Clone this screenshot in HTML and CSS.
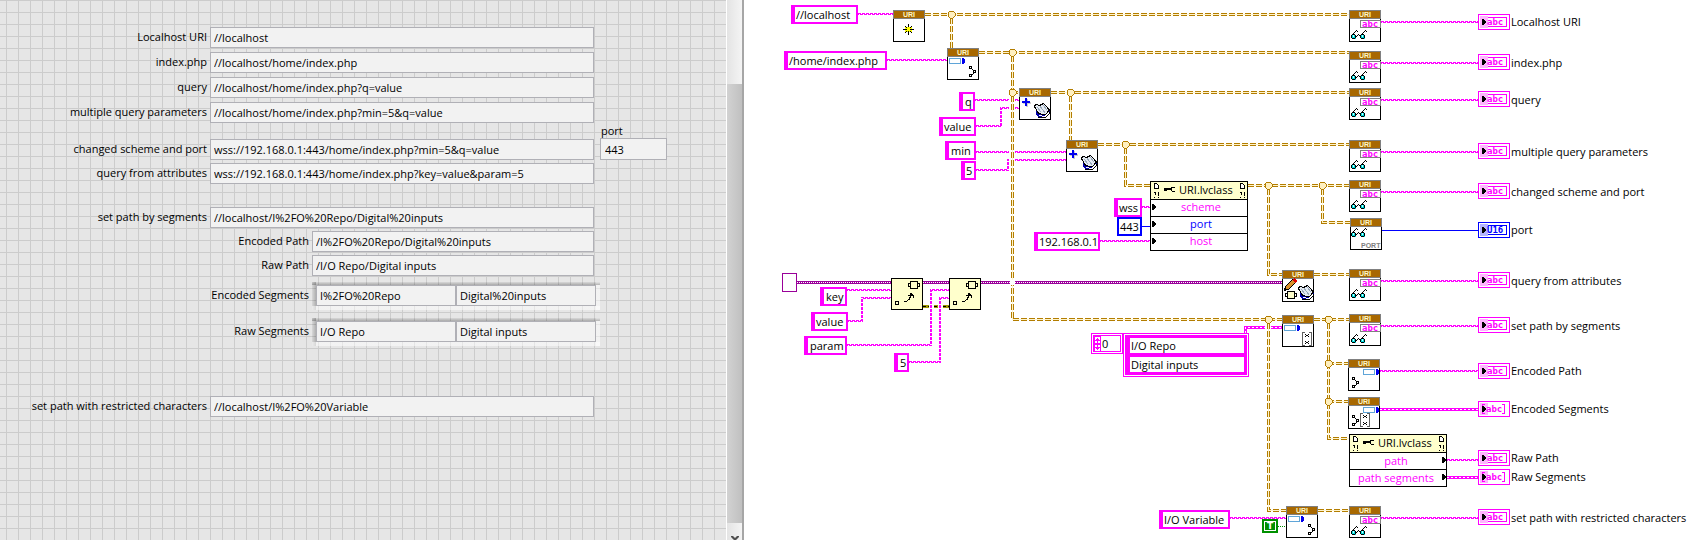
FILE: index.html
```html
<!DOCTYPE html>
<html lang="en">
<head>
<meta charset="utf-8">
<title>URI examples</title>
<link rel="stylesheet" href="styles.css">
</head>
<body>
<main class="workspace">
  <section class="front-panel" aria-label="Front panel">
    <form class="indicators">
      <div class="row"><label for="f1">Localhost URI</label><input id="f1" readonly value="//localhost"></div>
      <div class="row"><label for="f2">index.php</label><input id="f2" readonly value="//localhost/home/index.php"></div>
      <div class="row"><label for="f3">query</label><input id="f3" readonly value="//localhost/home/index.php?q=value"></div>
      <div class="row"><label for="f4">multiple query parameters</label><input id="f4" readonly value="//localhost/home/index.php?min=5&amp;q=value"></div>
      <div class="row row-port">
        <label for="f5">changed scheme and port</label><input id="f5" readonly value="wss://192.168.0.1:443/home/index.php?min=5&amp;q=value">
        <div class="port"><label for="port">port</label><input id="port" readonly value="443"></div>
      </div>
      <div class="row tight"><label for="f6">query from attributes</label><input id="f6" readonly value="wss://192.168.0.1:443/home/index.php?key=value&amp;param=5"></div>
      <div class="row spaced"><label for="f7">set path by segments</label><input id="f7" readonly value="//localhost/I%2FO%20Repo/Digital%20inputs"></div>
      <div class="row nested tight"><label for="f8">Encoded Path</label><input id="f8" readonly value="/I%2FO%20Repo/Digital%20inputs"></div>
      <div class="row nested tight"><label for="f9">Raw Path</label><input id="f9" readonly value="/I/O Repo/Digital inputs"></div>
      <div class="row nested segments"><label for="f10">Encoded Segments</label><div class="array"><input id="f10" readonly value="I%2FO%20Repo"><input aria-label="Encoded segment 2" readonly value="Digital%20inputs"></div></div>
      <div class="row nested segments"><label for="f11">Raw Segments</label><div class="array"><input id="f11" readonly value="I/O Repo"><input aria-label="Raw segment 2" readonly value="Digital inputs"></div></div>
      <div class="row last"><label for="f12">set path with restricted characters</label><input id="f12" readonly value="//localhost/I%2FO%20Variable"></div>
    </form>
  </section>
  <div class="scrollbar">
    <div class="thumb"></div>
    <button type="button" class="scroll-down" aria-label="Scroll down"><svg width="8" height="6" viewBox="0 0 8 6"><path d="M0 0h2l2 2 2-2h2v1L4 5 0 1z"/></svg></button>
  </div>
  <section class="diagram" aria-label="Block diagram">
<svg class="canvas" width="951" height="540" viewBox="744 0 951 540">
<defs>
  <symbol id="uri" width="32" height="32" viewBox="0 0 32 32">
    <rect class="node" x=".5" y=".5" width="31" height="31"/>
    <rect class="head" x=".5" y=".5" width="31" height="8"/>
    <text class="tiny cream" x="10" y="7">URI</text>
  </symbol>
  <symbol id="glasses" width="18" height="10" viewBox="0 0 18 10">
    <path class="cyan" d="M1 5h4v4h-4zM10 5h4v4h-4z"/>
    <path class="glint" d="M2 5h1v2h-1zM11 5h1v2h-1z"/>
    <path class="ink none" d="M1.500 4v1M.5 5v3M1 8.500h3M4.500 5v3M2 4.500h2M2.500 3v1M3.500 2v1M4.500 1v1M5 .5h1M6.500 1v1M5 6.500h1M6.500 5v1M7 4.500h1M8.500 5v1M9.500 5v3M10 8.500h3M13.500 5v3M10.500 4v1M11 4.500h2M11.500 3v1M12.500 2v1M13.500 1v1M14 .5h1M15.500 1v1"/>
  </symbol>
  <symbol id="reader" width="32" height="32" viewBox="0 0 32 32">
    <use href="#uri"/>
    <rect class="badge" x="11.5" y="10.500" width="20" height="7"/>
    <text class="abc pink" x="13" y="17">abc</text>
    <use href="#glasses" x="2" y="20"/>
  </symbol>
  <symbol id="bar" width="17" height="6" viewBox="0 0 17 6"><rect class="bar" x=".5" y=".5" width="11" height="5"/><path class="blue" d="M13 0h1l2 2v2l-2 2h-1z"/></symbol>
  <symbol id="tree" width="8" height="12" viewBox="0 0 8 12"><path class="ink" d="M3 3l2 2M3 9l2-2"/><path class="ink white" d="M.5.5h2v2h-2zM4.500 4.500h2v2h-2zM.5 8.500h2v2h-2z"/></symbol>
  <symbol id="items" width="10" height="14" viewBox="0 0 10 14"><path class="bracket" d="M3 .5H.5v13H3M7 .5h2.500v13H7"/><path class="black" d="M3 2h1v1h-1zM6 2h1v1h-1zM4 3h2v1h-2zM3 4h1v1h-1zM6 4h1v1h-1zM3 9h1v1h-1zM6 9h1v1h-1zM4 10h2v1h-2zM3 11h1v1h-1zM6 11h1v1h-1z"/></symbol>
  <symbol id="book" width="18" height="17" viewBox="0 0 18 17">
    <path class="navy" d="M3 9l3 3 6 1 5-5v3l-5 5-7-1-2-2z"/>
    <path class="paper" d="M1 4l3-2 3 1 4-2 6 7-5 5-7-2z"/>
    <path class="ink none" d="M1.500 3.500l2-1 3 1 4-2 6 6.500-4.500 5-6-1.500"/>
    <path class="grayline" d="M7 4l5 7M4 5l4 5M10 3l4 5"/>
    <path class="ink none" d="M1 4l5 8M5 15.500h7l5-5"/>
    <path class="whiteline" d="M6 13.500l6 1 4-4"/>
  </symbol>
  <symbol id="tag" width="12" height="8" viewBox="0 0 12 8"><path class="ink none" d="M2.500 2.500h-2v3h2M9.500 2.500h2v3h-2"/><path class="ink cream-fill" d="M3 .5h6l.5.5v6l-.5.5h-6l-.5-.5v-6z"/></symbol>
  <symbol id="attr" width="32" height="32" viewBox="0 0 32 32">
    <rect class="func" x=".5" y=".5" width="31" height="31"/><use href="#tag" x="17" y="3"/>
    <rect class="ink none" x="4.500" y="23.500" width="3" height="3"/>
    <path class="ink none" d="M13 23.500h2l3-2 2-4v-1M16.500 17.500h2l1.500-2 2 2v2"/>
  </symbol>
  <symbol id="plus" width="9" height="9" viewBox="0 0 9 9"><path class="shadow" d="M4 1h2v3h3v2h-3v3h-2v-3h-3v-2h3z"/><path class="blue" d="M3 0h2v3h3v2h-3v3h-2v-3h-3v-2h3z"/></symbol>
  <symbol id="addquery" width="32" height="32" viewBox="0 0 32 32"><use href="#uri"/><use href="#plus" x="3" y="10"/><use href="#book" x="14" y="14"/></symbol>
  <symbol id="term" width="32" height="16" viewBox="0 0 32 16">
    <rect class="t-out" x=".5" y=".5" width="31" height="15"/><rect class="t-in" x="3.500" y="3.500" width="25" height="9"/>
    <rect class="t-shade" x="2" y="2" width="8" height="12"/><path class="black" d="M4 5h1l3 3-3 3h-1z"/>
    <text class="abc t-text" x="9" y="11">abc</text>
  </symbol>
  <symbol id="termarray" width="32" height="16" viewBox="0 0 32 16">
    <rect class="t-out" x=".5" y=".5" width="31" height="15"/><rect class="t-shade" x="2" y="2" width="8" height="12"/>
    <path class="t-in" d="M7 3.500H4.500v9H7M24 3.500h2.500v9H24"/><path class="black" d="M4 5h1l3 3-3 3h-1z"/>
    <text class="abc t-text" x="8" y="11">abc</text>
  </symbol>
  <symbol id="joint" width="9" height="9" viewBox="0 0 9 9"><path class="joint" d="M3 1h3l2 2v3l-2 2h-3l-2-2v-3z"/></symbol>
  <symbol id="doc" width="6" height="16" viewBox="0 0 6 16"><path class="ink white" d="M.5.5h2l2 2v3h-4z"/><path class="ink none" d="M0 9.500h1.500v2l-1 1M.5 14v1M4.500 9v4M4.500 14v1"/></symbol>
  <symbol id="key" width="12" height="7" viewBox="0 0 12 7"><path class="black" d="M0 2h7v2H3v1H0z"/><path class="ink none" d="M11 1.500h-3l-1 1v1l1 1.500h3"/></symbol>
</defs>

<!-- Class wires -->
<g>
  <g class="cls"><path d="M925 14.500H1349M951.500 18V48M979 52.500H1349M1012.500 56V319.500H1282M1012 92.500H1019M1051 92.500H1349M1070.500 96V140M1098 144.500H1349M1125.500 148V185.500H1150M1248 185.500H1349M1268.500 189V274.500H1282M1322.500 189V222.500H1350M1314 274.500H1349M1314 319.500H1349M1328.500 323V438.500H1349M1328 363.500H1348M1328 401.500H1348M1268.500 323V510.500H1286M1318 510.500H1349"/></g>
  <g class="cls-core"><path d="M925 14.500H1349M951.500 18V48M979 52.500H1349M1012.500 56V319.500H1282M1012 92.500H1019M1051 92.500H1349M1070.500 96V140M1098 144.500H1349M1125.500 148V185.500H1150M1248 185.500H1349M1268.500 189V274.500H1282M1322.500 189V222.500H1350M1314 274.500H1349M1314 319.500H1349M1328.500 323V438.500H1349M1328 363.500H1348M1328 401.500H1348M1268.500 323V510.500H1286M1318 510.500H1349"/></g>
  <use href="#joint" x="947" y="10"/><use href="#joint" x="1008" y="48"/><use href="#joint" x="1008" y="88"/><use href="#joint" x="1066" y="88"/><use href="#joint" x="1121" y="140"/><use href="#joint" x="1264" y="181"/><use href="#joint" x="1318" y="181"/><use href="#joint" x="1264" y="315"/><use href="#joint" x="1324" y="315"/><use href="#joint" x="1324" y="359"/><use href="#joint" x="1324" y="397"/>
</g>

<!-- String wires -->
<g class="str a"><path d="M858 13.500H893M887 59.500H947M975 99.500H1009M1015 99.500H1019M976 125.500H1000.500V107.500H1009M1015 107.500H1019M976 151.500H1009M1015 151.500H1066M976 169.500H1007.500V159.500H1009M1015 159.500H1066M1142 206.500H1150M1100 240.500H1150M847 289.500H891M848 320.500H861.500V297.500H891M847 344.500H930.500V289.500H949M909 361.500H939.500V297.500H949M1230 517.500H1286M1381 21.500H1478M1381 62.500H1478M1381 99.500H1478M1381 151.500H1478M1381 191.500H1478M1381 280.500H1478M1381 325.500H1478M1380 370.500H1478M1447 459.500H1478M1381 517.500H1478"/></g>
<g class="str b"><path d="M858 14.500H893M887 60.500H947M975 100.500H1009M1015 100.500H1019M976 126.500H1001.500V108.500H1009M1015 108.500H1019M976 152.500H1009M1015 152.500H1066M976 170.500H1008.500V160.500H1009M1015 160.500H1066M1142 207.500H1150M1100 241.500H1150M847 290.500H891M848 321.500H862.500V298.500H891M847 345.500H931.500V290.500H949M909 362.500H940.500V298.500H949M1230 518.500H1286M1381 22.500H1478M1381 63.500H1478M1381 100.500H1478M1381 152.500H1478M1381 192.500H1478M1381 281.500H1478M1381 326.500H1478M1380 371.500H1478M1447 460.500H1478M1381 518.500H1478"/></g>
<path class="strarr" d="M1245.500 333V327.500H1265M1271 327.500H1282M1380 409.500H1478M1447 477.500H1478"/>
<path class="holes" d="M1245.500 333V327.500H1265M1271 327.500H1282M1380 409.500H1478M1447 477.500H1478"/>
<path class="num" d="M1142 226.500h8M1382 230.500h96"/>
<path class="mask" d="M1010 282.500h5"/>
<path class="variant" d="M797 282.500H891M923 282.500H949M981 282.500H1010M1015 282.500H1282"/>
<path class="dots" d="M797 282.500H891M923 282.500H949M981 282.500H1010M1015 282.500H1282"/>
<path class="err" d="M923 306.500h6M934 306.500h4M943 306.500h6"/><path class="err-core" d="M923 306.500h6M934 306.500h4M943 306.500h6"/>
<path class="bool" d="M1278 526.500h8"/>

<!-- Nodes -->
<g class="gray-node"><use href="#uri" x="893" y="10"/></g>
<path class="spark" d="M905 27h7v5h-7z"/><path class="ink" d="M908.500 24v3M908.500 31v4M903 29.500h4M910 29.500h4M905 26l2 2M912 26l-2 2M905 33l2-2M912 33l-2-2"/>
<use href="#uri" x="947" y="48"/><use href="#bar" x="949" y="58"/><use href="#tree" x="969" y="66"/>
<use href="#addquery" x="1019" y="88"/><use href="#addquery" x="1066" y="140"/>
<use href="#reader" x="1349" y="10"/><use href="#reader" x="1349" y="51"/><use href="#reader" x="1349" y="88"/><use href="#reader" x="1349" y="140"/><use href="#reader" x="1349" y="180"/><use href="#reader" x="1349" y="269"/><use href="#reader" x="1349" y="314"/><use href="#reader" x="1349" y="506"/>
<use href="#uri" x="1350" y="218"/><use href="#glasses" x="1351" y="228"/><text class="tiny gray" x="1361" y="248">PORT</text>
<use href="#attr" x="891" y="278"/><use href="#attr" x="949" y="278"/>
<use href="#uri" x="1282" y="270"/><use href="#book" x="1297" y="284"/><use href="#tag" x="1285" y="291"/>
<path class="ink pencil" d="M1285 290l1-4 7-7 3 3-7 7z"/><path class="red" d="M1292 280l2-2 3 3-2 2z"/><path class="black" d="M1284 288h2v3h-2z"/>
<use href="#uri" x="1282" y="315"/><use href="#bar" x="1284" y="325"/><use href="#items" x="1302" y="332"/>
<use href="#uri" x="1348" y="359"/><use href="#bar" x="1363" y="369"/><use href="#tree" x="1352" y="377"/>
<use href="#uri" x="1348" y="397"/><use href="#bar" x="1363" y="407"/><use href="#tree" x="1352" y="415"/><use href="#items" x="1360" y="413"/>
<use href="#uri" x="1286" y="506"/><use href="#bar" x="1288" y="516"/><use href="#tree" x="1308" y="524"/>

<!-- Property nodes -->
<rect class="node" x="1150.500" y="181.500" width="97" height="69"/><rect class="func" x="1150.500" y="181.500" width="97" height="18"/>
<path class="ink" d="M1150 216.500h98M1150 233.500h98"/>
<use href="#doc" x="1154" y="183"/><use href="#key" x="1164" y="186"/><use href="#doc" x="1240" y="183"/>
<path class="black" d="M1152 204h1l3 3-3 3h-1zM1152 221h1l3 3-3 3h-1zM1152 238h1l3 3-3 3h-1z"/>
<text x="1179" y="194">URI.lvclass</text>
<text class="mid pink" x="1201" y="211">scheme</text><text class="mid bluetext" x="1201" y="228">port</text><text class="mid pink" x="1201" y="245">host</text>
<rect class="node" x="1349.500" y="434.500" width="97" height="52"/><rect class="func" x="1349.500" y="434.500" width="97" height="18"/>
<path class="ink" d="M1349 469.500h98"/>
<use href="#doc" x="1353" y="436"/><use href="#key" x="1363" y="439"/><use href="#doc" x="1439" y="436"/>
<path class="black" d="M1442 457h1l3 3-3 3h-1zM1442 474h1l3 3-3 3h-1z"/>
<text x="1378" y="447">URI.lvclass</text>
<text class="mid pink" x="1396" y="465">path</text><text class="mid pink" x="1396" y="482">path segments</text>

<!-- Constants -->
<path class="const" d="M792 6h65v17h-65zM793 6v17M785 52h101v17h-101zM786 52v17M960 93h14v17h-14zM961 93v17M940 118h35v17h-35zM941 118v17M946 142h29v17h-29zM947 142v17M962 162h13v17h-13zM963 162v17M1115 199h26v17h-26zM1116 199v17M1035 233h64v17h-64zM1036 233v17M821 288h25v17h-25zM822 288v17M812 313h35v17h-35zM813 313v17M805 337h41v17h-41zM806 337v17M895 354h13v17h-13zM896 354v17M1160 511h69v17h-69zM1161 511v17"/>
<path class="edge" d="M794 5v19M787 51v19M962 92v19M942 117v19M948 141v19M964 161v19M1117 198v19M1037 232v19M823 287v19M814 312v19M807 336v19M897 353v19M1162 510v19"/>
<path class="const numconst" d="M1118 218h23v17h-23z"/>
<text x="796" y="19">//localhost</text><text x="789" y="65">/home/index.php</text><text x="965" y="106">q</text><text x="944" y="131">value</text><text x="951" y="155">min</text><text x="966" y="175">5</text>
<text x="1119" y="212">wss</text><text x="1120" y="231">443</text><text x="1039" y="246">192.168.0.1</text>
<text x="826" y="301">key</text><text x="816" y="326">value</text><text x="810" y="350">param</text><text x="900" y="367">5</text><text x="1164" y="524">I/O Variable</text>
<rect class="empty" x="782.500" y="273.500" width="14" height="18"/>
<rect class="thin" x="1091.500" y="333.500" width="31" height="20"/><rect class="thin" x="1093.500" y="335.500" width="27" height="16"/>
<path class="pink" d="M1094 336h7v16h-7z"/><path class="spin" d="M1095 337h5v6h-5zM1095 345h5v6h-5z"/><path class="pink" d="M1097 338h1l2 3h-2v2h-1v-2h-2zM1097 345h1v2h2l-2 3h-1l-2-3h2z"/><text x="1102" y="348">0</text>
<rect class="thin" x="1123.500" y="333.500" width="125" height="43"/><path class="pink" d="M1125 335h122v40h-122z"/><path class="cell" d="M1130 338h114v15h-114zM1130 357h114v15h-114z"/>
<text x="1131" y="350">I/O Repo</text><text x="1131" y="369">Digital inputs</text>
<path class="green" d="M1262 519h16v14h-16z"/><path class="green-in" d="M1264.500 521.500h11v9h-11z"/><text class="true" x="1267" y="529">T</text>

<!-- Indicator terminals -->
<use href="#term" x="1478" y="14"/><use href="#term" x="1478" y="54"/><use href="#term" x="1478" y="91"/><use href="#term" x="1478" y="143"/><use href="#term" x="1478" y="183"/><use href="#term" x="1478" y="272"/><use href="#term" x="1478" y="317"/><use href="#term" x="1478" y="363"/><use href="#termarray" x="1478" y="401"/><use href="#term" x="1478" y="450"/><use href="#termarray" x="1478" y="469"/><use href="#term" x="1478" y="509"/>
<g class="u16"><rect class="t-out" x="1478.500" y="222.500" width="31" height="15"/><rect class="t-in" x="1481.500" y="225.500" width="25" height="9"/><rect class="t-shade" x="1480" y="224" width="8" height="12"/><path class="black" d="M1482 227h1l3 3-3 3h-1z"/><text class="abc t-text" x="1487" y="233">U16</text></g>
<text x="1511" y="26">Localhost URI</text><text x="1511" y="67">index.php</text><text x="1511" y="104">query</text><text x="1511" y="156">multiple query parameters</text><text x="1511" y="196">changed scheme and port</text><text x="1511" y="234">port</text><text x="1511" y="285">query from attributes</text><text x="1511" y="330">set path by segments</text><text x="1511" y="375">Encoded Path</text><text x="1511" y="413">Encoded Segments</text><text x="1511" y="462">Raw Path</text><text x="1511" y="481">Raw Segments</text><text x="1511" y="522">set path with restricted characters</text>
</svg>
  </section>
</main>
</body>
</html>
```
FILE: styles.css
```css
* { box-sizing: border-box; }
body { margin: 0; background: #fff; font: 11px/14px "Open Sans", "Noto Sans", sans-serif; color: #000; }
.workspace { display: flex; min-height: 100vh; }

/* Front panel */
.front-panel {
  flex: 726 1 0;
  min-width: 668px;
  padding-top: 27px;
  background-color: #e6e6e6;
  background-image: linear-gradient(#ccc 1px, transparent 1px), linear-gradient(90deg, #ccc 1px, transparent 1px);
  background-size: 12px 12px;
  background-position: 0 0, 6px 0;
}
.indicators { display: flex; flex-direction: column; }
.row { display: flex; align-items: flex-end; margin-bottom: 4px; }
.row > label { flex: none; width: 210px; padding: 0 3px 4px 0; text-align: right; }
.row input {
  width: 384px;
  height: 21px;
  padding: 0 3px;
  border: 1px solid #b0b0b6;
  border-radius: 0;
  background: #f2f2f2;
  font: inherit;
  color: inherit;
  outline: 0;
}
.row-port { margin: -3px 0 3px; }
.tight { margin-bottom: 3px; }
.spaced { margin: 20px 0 3px; }
.nested > label { width: 312px; }
.nested input { width: 282px; }
.segments { margin: 3px 0 5px; }
.segments > label { padding-bottom: 8px; }
.array {
  display: flex;
  padding: 3px 4px 4px;
  background:
    linear-gradient(rgba(0, 0, 0, .06), rgba(0, 0, 0, .26)) 0 0 / 100% 3px no-repeat,
    linear-gradient(rgba(255, 255, 255, .5), rgba(255, 255, 255, .5)) 0 100% / 100% 4px no-repeat,
    linear-gradient(90deg, rgba(0, 0, 0, .06), rgba(0, 0, 0, .24)) 0 0 / 4px 100% no-repeat,
    linear-gradient(rgba(255, 255, 255, .5), rgba(255, 255, 255, .5)) 100% 0 / 4px 100% no-repeat;
}
.array input { width: 140px; }
.last { margin: 45px 0 0; }
.port { display: flex; flex-direction: column; margin-left: 6px; }
.port label { padding-left: 1px; }
.row .port input { width: 67px; height: 22px; padding: 0 4px; }

.scrollbar {
  display: flex;
  flex-direction: column;
  flex: none;
  width: 18px;
  padding-top: 84px;
  border-left: 1px solid #fff;
  border-right: 2px solid #a6a6a6;
  background: linear-gradient(90deg, #e4e4e4, #f4f4f4);
}
.thumb { flex: 1; background: linear-gradient(90deg, #d2d2d2, #c0c0c0); }
.scroll-down { height: 17px; padding: 0; border: 0; background: none; overflow: hidden; fill: #505050; line-height: 0; }
.scroll-down svg { margin-top: 13px; }

/* Block diagram */
.diagram { flex: 951 1 0; min-width: 951px; background: #fff; }
.canvas { display: block; shape-rendering: crispEdges; font-size: 11px; }
.canvas path, .canvas rect { stroke-width: 1px; }
.cls, .cls-core, .str, .strarr, .holes, .num, .variant, .dots, .err, .err-core, .bool, .mask { fill: none; }
.canvas .cls path { stroke: #b37d00; stroke-width: 3px; stroke-dasharray: 6 2; }
.cls-core path { stroke: #fff4cc; }
.joint { fill: #fff0c0; stroke: #b37d00; }
.canvas .mask { stroke: #fff; stroke-width: 5px; }
.str path { stroke: #f0f; stroke-dasharray: 3 1; }
.str.b path { stroke-dashoffset: 2px; }
.canvas .strarr { stroke: #f0f; stroke-width: 3px; }
.holes { stroke: #fff; stroke-dasharray: 2 2; }
.num { stroke: #00f; }
.canvas .variant { stroke: #909; stroke-width: 3px; }
.dots { stroke: #fff; stroke-dasharray: 1 1; }
.canvas .err { stroke: #a09a00; stroke-width: 3px; }
.err-core { stroke: #000; stroke-dasharray: 3 2; }
.bool { stroke: #009000; stroke-dasharray: 1 1; }
.node { fill: #fff; stroke: #000; }
.gray-node .node { stroke: #808080; }
.head { fill: #a86800; stroke: #808080; }
.func { fill: #ffc; stroke: #000; }
.ink { stroke: #000; }
.none { fill: none; }
.white { fill: #fff; }
.cyan { fill: #0dd; }
.glint { fill: #cff; }
.navy { fill: #00a; }
.paper { fill: #e4eaf2; }
.grayline { fill: none; stroke: #9ab; }
.whiteline { fill: none; stroke: #fff; }
.cream-fill { fill: #ffc; }
.shadow { fill: #ccc; }
.badge { fill: #fff; stroke: #808080; }
.bar { fill: #fff; stroke: #5fa5d8; }
.bracket { fill: none; stroke: #606060; }
.blue { fill: #00e; }
.black { fill: #000; }
.red { fill: #d00; }
.pencil { fill: #d8902c; }
.spark { fill: #ff0; }
.pink { fill: #f0f; }
.bluetext { fill: #00f; }
.gray { fill: #808080; }
.mid { text-anchor: middle; }
.tiny { font: bold 7px "Liberation Sans", sans-serif; }
.cream { fill: #fff8c8; }
.abc { font: bold 9px "DejaVu Sans Mono", monospace; }
.canvas .const { fill: #fff; stroke: #f0f; stroke-width: 2px; }
.canvas .numconst { stroke: #00f; }
.canvas .edge { fill: none; stroke: #f0f; stroke-width: 2px; }
.empty { fill: #fff; stroke: #909; }
.thin { fill: #fff; stroke: #f0f; }
.spin, .cell { fill: #fff; }
.green { fill: #009000; }
.green-in { fill: none; stroke: #fff; }
.true { font: bold 9px "DejaVu Sans", sans-serif; fill: #fff; }
.t-out { fill: #fff; stroke: #f0f; }
.t-in { fill: none; stroke: #f0f; }
.t-shade { fill: #ffb3ff; }
.t-text { fill: #f0f; }
.u16 .t-out, .u16 .t-in { stroke: #00f; }
.u16 .t-shade { fill: #b3b3ff; }
.u16 .t-text { fill: #00f; }
```
